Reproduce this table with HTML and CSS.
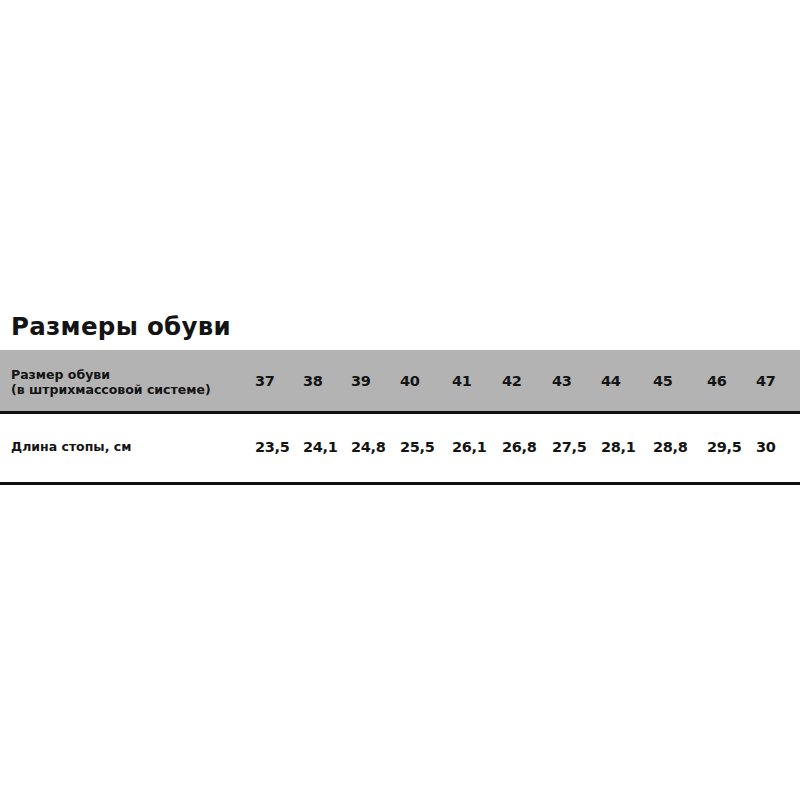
FILE: index.html
```html
<!DOCTYPE html>
<html lang="ru">
<head>
<meta charset="utf-8">
<link rel="stylesheet" href="styles.css">
</head>
<body>
<div class="page">
  <h1 class="title">Размеры обуви</h1>
  <div class="table">
    <div class="row row-head">
      <div class="label">Размер обуви<br>(в штрихмассовой системе)</div>
      <div class="cell">37</div>
      <div class="cell">38</div>
      <div class="cell">39</div>
      <div class="cell">40</div>
      <div class="cell">41</div>
      <div class="cell">42</div>
      <div class="cell">43</div>
      <div class="cell">44</div>
      <div class="cell">45</div>
      <div class="cell">46</div>
      <div class="cell">47</div>
    </div>
    <div class="row row-body">
      <div class="label">Длина стопы, см</div>
      <div class="cell">23,5</div>
      <div class="cell">24,1</div>
      <div class="cell">24,8</div>
      <div class="cell">25,5</div>
      <div class="cell">26,1</div>
      <div class="cell">26,8</div>
      <div class="cell">27,5</div>
      <div class="cell">28,1</div>
      <div class="cell">28,8</div>
      <div class="cell">29,5</div>
      <div class="cell">30</div>
    </div>
  </div>
</div>
</body>
</html>
```
FILE: styles.css
```css
html, body {
  margin: 0;
  padding: 0;
  background: #ffffff;
}
body {
  font-family: "DejaVu Sans", "Liberation Sans", sans-serif;
  color: #141414;
  width: 800px;
  height: 800px;
}
.page {
  padding-top: 310px;
}
.title {
  margin: 0;
  padding-left: 11px;
  font-size: 24.5px;
  font-weight: bold;
  line-height: 34px;
  height: 40px;
  letter-spacing: 0.3px;
}
.row {
  display: grid;
  grid-template-columns: 244px 48px 48px 49px 52px 50px 50px 49px 52px 54px 49px 1fr;
  align-items: center;
  padding-left: 11px;
  border-bottom: 3px solid #111111;
}
.row-head {
  background: #b3b3b3;
  height: 61px;
}
.row-body {
  background: #ffffff;
  height: 68px;
}
.label {
  font-size: 12.5px;
  font-weight: bold;
  line-height: 15px;
}
.row-head .label {
  padding-top: 2px;
}
.row-body .label {
  padding-bottom: 3px;
}
.cell {
  font-size: 14.5px;
  font-weight: bold;
  white-space: nowrap;
  letter-spacing: -0.3px;
}
.row-body .cell {
  padding-bottom: 3px;
}
```
